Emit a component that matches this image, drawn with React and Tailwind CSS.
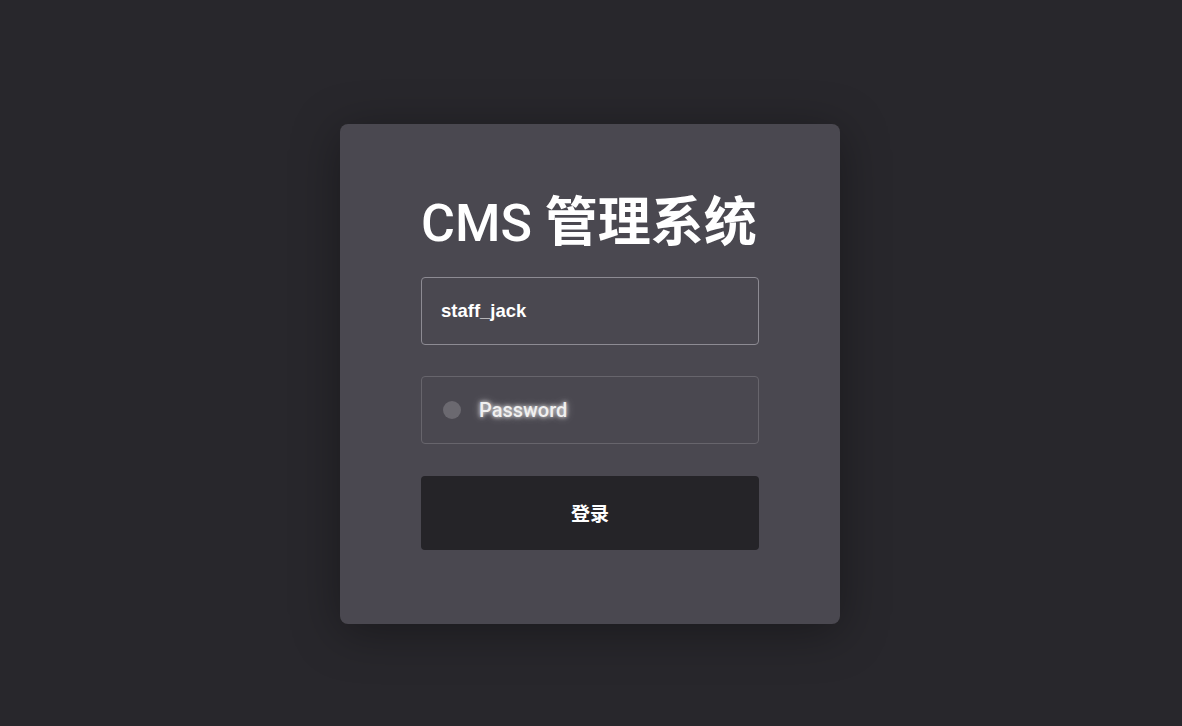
export default function App() {
  return (
    <div className="min-h-screen w-full bg-[#28272c] flex items-start justify-center pt-[124px] pr-[2px] font-['Roboto','Noto_Sans_CJK_SC',sans-serif]">
      <div className="w-[500px] h-[500px] bg-[#4a4850] rounded-lg shadow-[0_8px_48px_rgba(0,0,0,0.35)] px-[81px] pt-[64px] flex flex-col">
        <h1 className="text-[52px] leading-[60px] text-white whitespace-nowrap">
          <span className="font-medium">CMS </span>
          <span className="text-[53px] font-bold font-['Noto_Sans_CJK_SC',sans-serif]">管理系统</span>
        </h1>
        <div className="mt-[23px] h-[68px] border border-[#8d8b93] rounded-[4px] flex items-center pl-[19px]">
          <span className="text-[18.5px] font-bold text-white font-['Liberation_Sans',Arial,sans-serif]">staff_jack</span>
        </div>
        <div className="mt-[31px] h-[68px] border border-[#67656c] rounded-[4px] flex items-center pl-[21px]">
          <span className="w-[18px] h-[18px] rounded-full bg-[#6b6970] shrink-0"></span>
          <span className="ml-[18px] text-[20px] font-medium text-[#f0f0f0] [text-shadow:0_0_4px_rgba(255,255,255,0.9),0_0_9px_rgba(255,255,255,0.45)]">Password</span>
        </div>
        <button className="mt-[32px] h-[74px] w-full bg-[#252428] rounded-[4px] flex items-center justify-center text-white text-[19px] font-bold font-['Noto_Sans_CJK_SC',sans-serif]">
          登录
        </button>
      </div>
    </div>
  );
}
